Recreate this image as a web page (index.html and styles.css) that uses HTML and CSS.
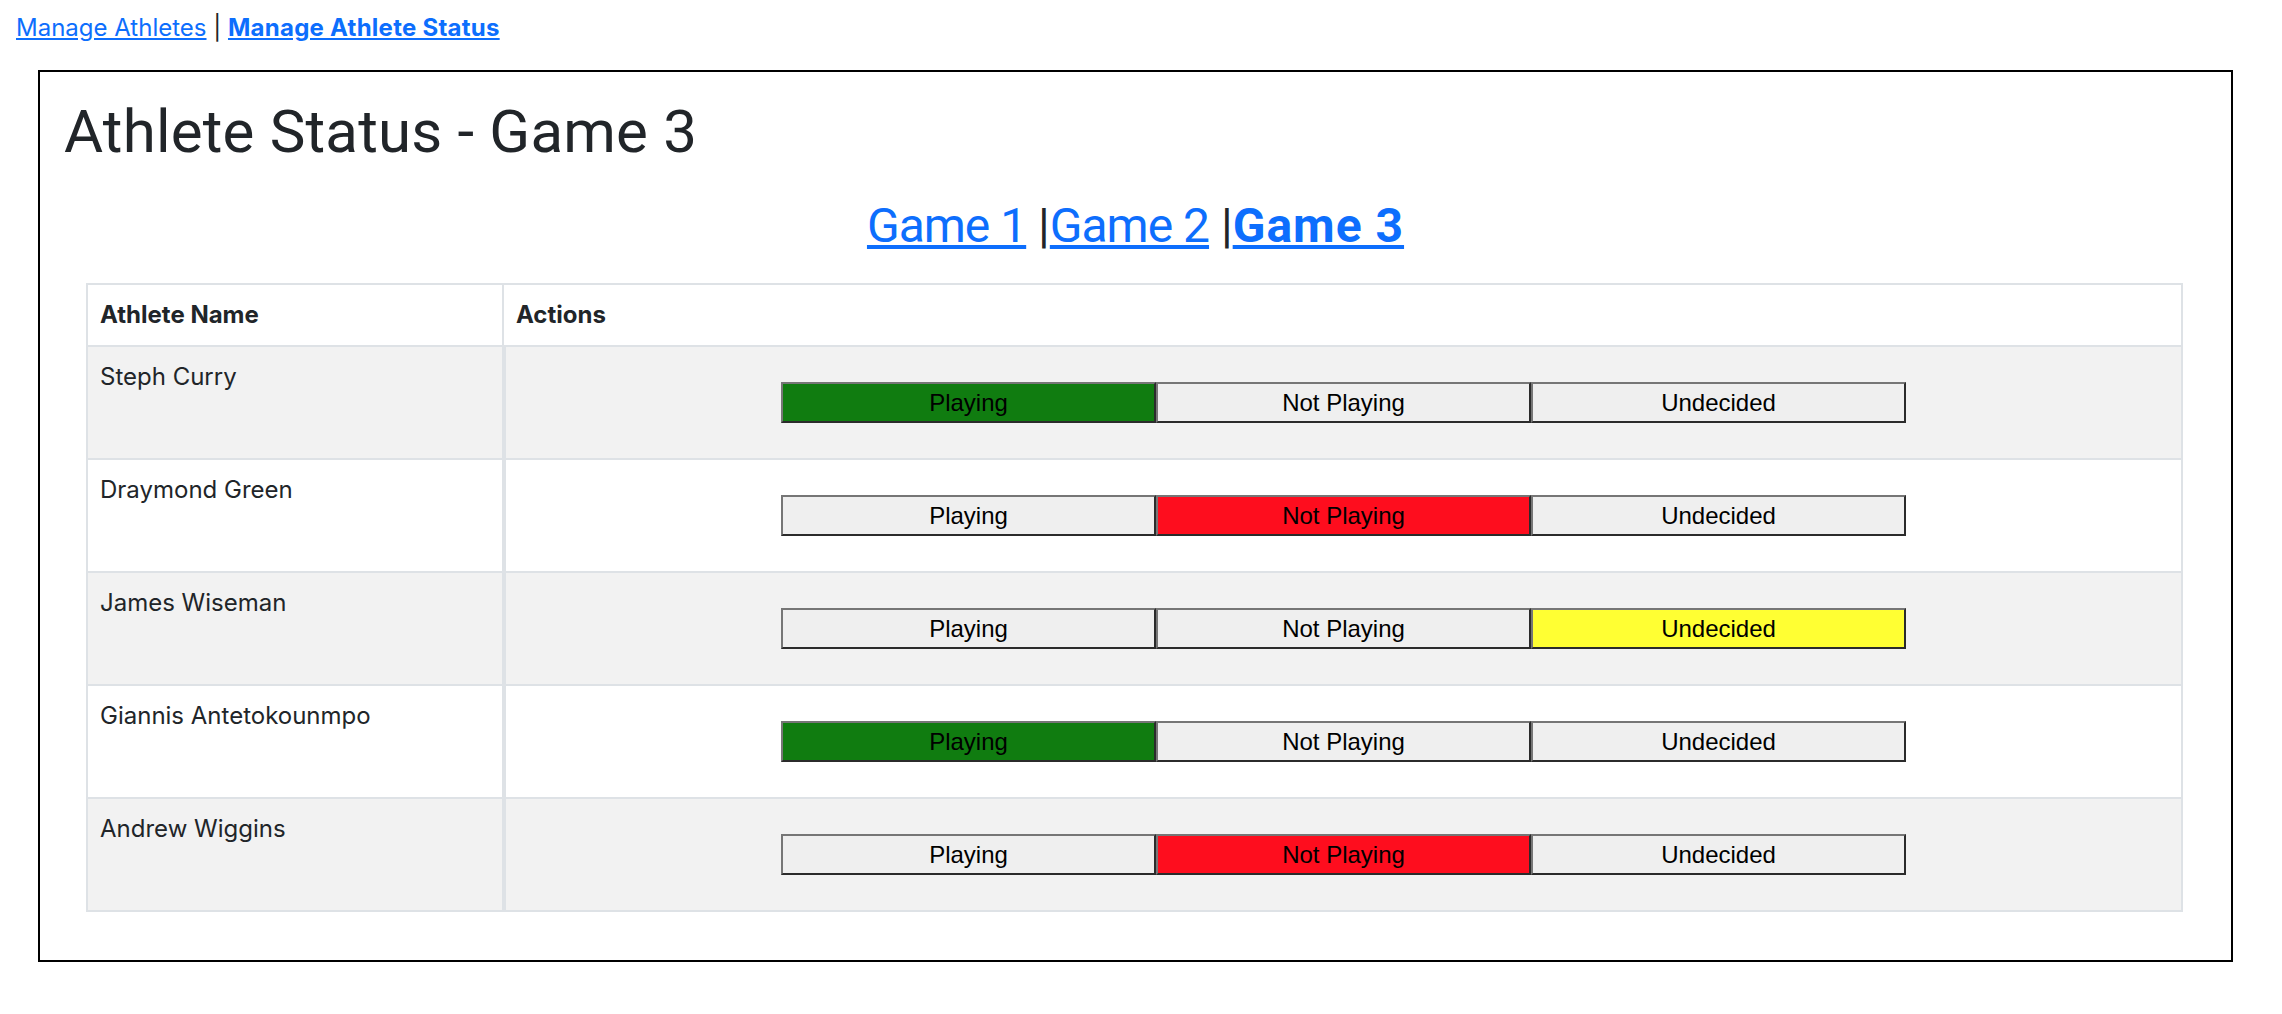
FILE: index.html
```html
<!DOCTYPE html>
<html lang="en">
<head>
<meta charset="utf-8">
<title>Athlete Status - Game 3</title>
<link rel="stylesheet" href="styles.css">
</head>
<body>
<nav class="topnav"><a href="#" class="navlink">Manage Athletes</a> | <a href="#" class="navlink navlink-active">Manage Athlete Status</a></nav>
<main class="panel">
  <h1 class="title">Athlete Status - Game 3</h1>
  <div class="games"><a href="#" class="game-link">Game 1</a> |<a href="#" class="game-link">Game 2</a> |<a href="#" class="game-link game-link-active">Game 3</a></div>
  <div class="table-wrap">
    <table class="status-table">
      <colgroup><col class="col-name"><col class="col-actions"></colgroup>
      <thead>
        <tr><th>Athlete Name</th><th>Actions</th></tr>
      </thead>
      <tbody>
        <tr>
          <td class="name">Steph Curry</td>
          <td class="actions-cell"><div class="actions"><button class="status-btn playing">Playing</button><button class="status-btn">Not Playing</button><button class="status-btn">Undecided</button></div></td>
        </tr>
        <tr>
          <td class="name">Draymond Green</td>
          <td class="actions-cell"><div class="actions"><button class="status-btn">Playing</button><button class="status-btn not-playing">Not Playing</button><button class="status-btn">Undecided</button></div></td>
        </tr>
        <tr>
          <td class="name">James Wiseman</td>
          <td class="actions-cell"><div class="actions"><button class="status-btn">Playing</button><button class="status-btn">Not Playing</button><button class="status-btn undecided">Undecided</button></div></td>
        </tr>
        <tr>
          <td class="name">Giannis Antetokounmpo</td>
          <td class="actions-cell"><div class="actions"><button class="status-btn playing">Playing</button><button class="status-btn">Not Playing</button><button class="status-btn">Undecided</button></div></td>
        </tr>
        <tr>
          <td class="name">Andrew Wiggins</td>
          <td class="actions-cell"><div class="actions"><button class="status-btn">Playing</button><button class="status-btn not-playing">Not Playing</button><button class="status-btn">Undecided</button></div></td>
        </tr>
      </tbody>
    </table>
  </div>
</main>
</body>
</html>
```

FILE: styles.css
```css
* { box-sizing: border-box; }

body {
  margin: 0;
  background: #fff;
  color: #212529;
  font-family: "Inter", "Roboto", "Liberation Sans", sans-serif;
  font-size: 24px;
  line-height: 36px;
}

a { color: #0d6efd; text-decoration: underline; }

.topnav {
  padding: 10px 16px 0;
  line-height: 36px;
  height: 46px;
}

.navlink-active { font-weight: 700; letter-spacing: 0.25px; }

.panel {
  margin: 24px 49px 40px 38px;
  border: 2px solid #000;
  padding: 24px;
}

.title {
  margin: 0;
  font-family: "Roboto", "Inter", sans-serif;
  font-weight: 400;
  font-size: 60px;
  line-height: 72px;
  letter-spacing: 0.2px;
  color: #212529;
}

.games {
  margin-top: 29px;
  text-align: center;
  font-family: "Roboto", "Inter", sans-serif;
  font-size: 48px;
  line-height: 57px;
  color: #212529;
}

.game-link { letter-spacing: -1px; }
.game-link-active { font-weight: 700; letter-spacing: 1px; }

.table-wrap {
  padding: 29px 24px 24px 22px;
}

.status-table {
  width: 100%;
  table-layout: fixed;
  border-collapse: separate;
  border-spacing: 0;
  border-top: 2px solid #dee2e6;
  border-left: 2px solid #dee2e6;
}

.col-name { width: 416px; }

.status-table th,
.status-table td {
  border-right: 2px solid #dee2e6;
  border-bottom: 2px solid #dee2e6;
  padding: 12px;
  text-align: left;
  vertical-align: top;
}

.status-table th {
  font-weight: 700;
  color: #212529;
}

.status-table tbody tr:nth-child(odd) td { background: #f2f2f2; }
.status-table tbody tr:nth-child(even) td { background: #fff; }

.status-table td.actions-cell { border-left: 2px solid #dee2e6; }

.actions {
  display: flex;
  justify-content: center;
  padding: 23px 0;
}

.status-btn {
  width: 375px;
  height: 41px;
  margin: 0;
  padding: 0;
  font-family: "Liberation Sans", "Arial", sans-serif;
  font-size: 24px;
  line-height: 1;
  color: #000;
  background: #efefef;
  border-style: solid;
  border-width: 2px;
  border-color: #767676 #2b2b2b #2b2b2b #767676;
  border-radius: 0;
}

.status-btn.playing { background: #107c10; }
.status-btn.not-playing { background: #fe0d1e; }
.status-btn.undecided { background: #ffff33; }
```
